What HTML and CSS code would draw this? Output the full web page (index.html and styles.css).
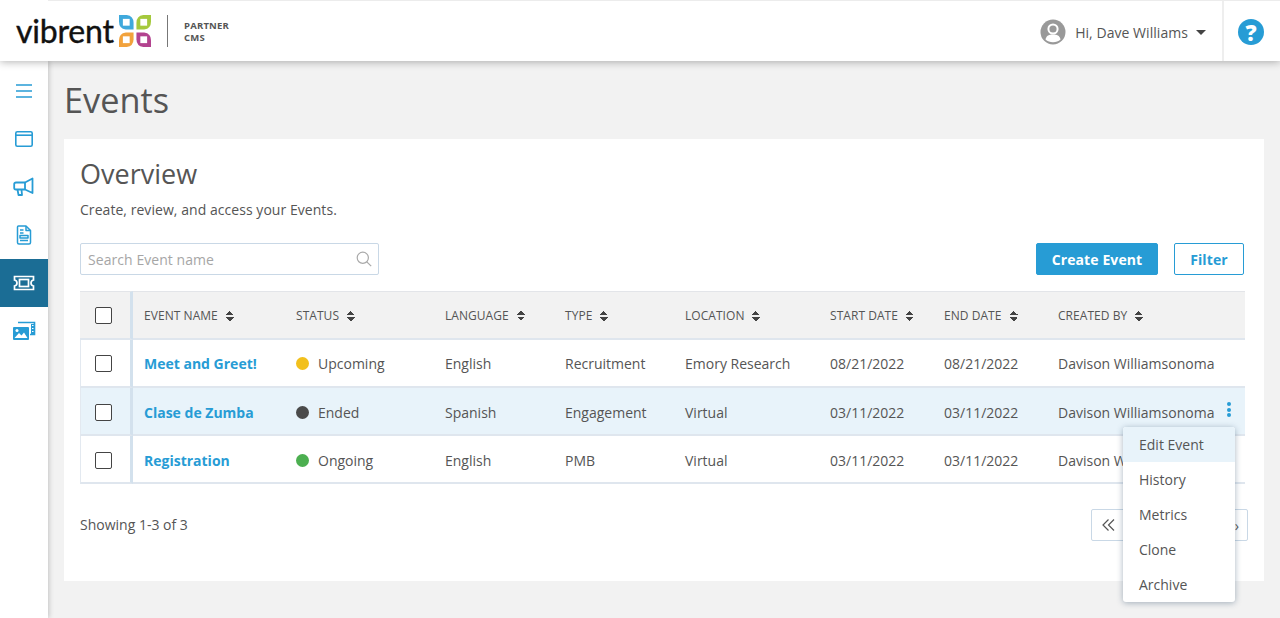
FILE: index.html
```html
<!DOCTYPE html>
<html lang="en">
<head>
<meta charset="utf-8">
<title>Events</title>
<link rel="stylesheet" href="styles.css">
</head>
<body>
<header class="topbar">
  <div class="brand">
    <span class="wordmark">vibrent</span>
    <svg class="brand-mark" width="32" height="32" viewBox="0 0 33 33">
      <path d="M0 0H8Q15 1 15 8V15H7Q0 14 0 7Z" fill="#3fa9dc"/>
      <path d="M33 0H25Q18 1 18 8V15H26Q33 14 33 7Z" fill="#a5c93d"/>
      <path d="M15 18H7Q0 19 0 26V33H8Q15 32 15 25Z" fill="#f2a23c"/>
      <path d="M18 18H26Q33 19 33 26V33H25Q18 32 18 25Z" fill="#b3438f"/>
      <g fill="#fff">
        <rect x="4" y="4" width="7" height="7"/>
        <rect x="22" y="4" width="7" height="7"/>
        <rect x="4" y="22" width="7" height="7"/>
        <rect x="22" y="22" width="7" height="7"/>
      </g>
    </svg>
    <span class="brand-rule"></span>
    <span class="brand-sub">PARTNER<br>CMS</span>
  </div>
  <div class="user">
    <svg width="26" height="26" viewBox="0 0 26 26">
      <circle cx="13" cy="13" r="12.5" fill="#999"/>
      <circle cx="13" cy="10" r="4.6" fill="none" stroke="#fff" stroke-width="2"/>
      <path d="M5.5 20.5C6.5 16.5 9 15.6 13 15.6S19.5 16.5 20.5 20.5C18.5 22.5 16 23.2 13 23.2S7.5 22.5 5.5 20.5Z" fill="#fff"/>
    </svg>
    <span class="user-name">Hi, Dave Williams</span>
    <span class="caret"></span>
  </div>
  <div class="help">
    <span class="help-dot">?</span>
  </div>
</header>

<div class="shell">
  <nav class="sidenav">
    <a class="nav-item">
      <svg width="18" height="16" viewBox="0 0 18 16" fill="none" stroke="#279cd5" stroke-width="1.7"><path d="M1 2H17M1 8H17M1 14H17"/></svg>
    </a>
    <a class="nav-item">
      <svg width="20" height="18" viewBox="0 0 20 18" fill="none" stroke="#279cd5" stroke-width="1.6"><rect x="1.8" y="1.8" width="16.4" height="14.4" rx="1.5"/><path d="M1.8 5.2H18.2"/></svg>
    </a>
    <a class="nav-item">
      <svg width="22" height="20" viewBox="0 0 22 20" fill="none" stroke="#279cd5" stroke-width="1.8" stroke-linejoin="round"><path d="M3 5.5H12L19.5 1.5V16L12 12.5H3Q1.2 12.5 1.2 11V7Q1.2 5.5 3 5.5Z"/><path d="M12 5.5V12.5M4.5 12.5L5.5 18H9L8.500 12.5"/></svg>
    </a>
    <a class="nav-item">
      <svg width="16" height="20" viewBox="0 0 16 20" fill="none" stroke="#279cd5" stroke-width="1.5" stroke-linejoin="round"><path d="M2.5 1H10L14.5 5.5V17.5Q14.5 19 13 19H3Q1.5 19 1.5 17.5V2Q1.5 1 2.5 1Z"/><path d="M10 1V5.5H14.5M4 5H7.5M4 8H7.5M4 15.5H12"/><rect x="4" y="10.5" width="8" height="2.5"/></svg>
    </a>
    <a class="nav-item nav-active">
      <svg width="22" height="16" viewBox="0 0 22 16" fill="none" stroke="#fff" stroke-width="1.7"><path d="M1.5 1.5H20.5V5Q18 5.5 18 8T20.5 11V14.5H1.5V11Q4 10.500 4 8T1.500 5Z"/><rect x="6.500" y="4.500" width="9" height="7"/></svg>
    </a>
    <a class="nav-item">
      <svg width="24" height="20" viewBox="0 0 24 20"><path d="M6 1.500H22.500V13.500H18" fill="none" stroke="#279cd5" stroke-width="1.600"/><rect x="19" y="3" width="3.500" height="10" fill="#279cd5"/><path d="M20 4.500H21.500M20 7.500H21.500M20 10.500H21.500" stroke="#fff"/><rect x="1" y="6" width="16" height="13" rx="1" fill="#279cd5"/><circle cx="5" cy="9.500" r="1.500" fill="#fff"/><path d="M2.500 17L7 12L9.500 14.500L12 11.500L15.500 17Z" fill="#fff"/></svg>
    </a>
  </nav>

  <main class="content">
    <h1 class="page-title">Events</h1>
    <section class="card">
      <h2 class="card-title">Overview</h2>
      <p class="card-intro">Create, review, and access your Events.</p>
      <div class="toolbar">
        <label class="search">
          <span class="search-text">Search Event name</span>
          <svg width="16" height="16" viewBox="0 0 16 16" fill="none" stroke="#a9a9a9" stroke-width="1.200"><circle cx="6.800" cy="6.800" r="5.600"/><path d="M10.800 10.800L15.200 15.200"/></svg>
        </label>
        <div class="actions">
          <button class="btn btn-solid">Create Event</button>
          <button class="btn btn-line">Filter</button>
        </div>
      </div>

      <div class="table-wrap">
        <table class="events">
          <colgroup>
            <col class="c-check"><col class="c-name"><col class="c-status"><col class="c-lang"><col class="c-type"><col class="c-loc"><col class="c-date"><col class="c-date"><col class="c-by">
          </colgroup>
          <thead>
            <tr>
              <th class="check"><span class="box"></span></th>
              <th>EVENT NAME<span class="sort"></span></th>
              <th>STATUS<span class="sort"></span></th>
              <th>LANGUAGE<span class="sort"></span></th>
              <th>TYPE<span class="sort"></span></th>
              <th>LOCATION<span class="sort"></span></th>
              <th>START DATE<span class="sort"></span></th>
              <th>END DATE<span class="sort"></span></th>
              <th>CREATED BY<span class="sort"></span></th>
            </tr>
          </thead>
          <tbody>
            <tr>
              <td class="check"><span class="box"></span></td>
              <td><a class="event-link">Meet and Greet!</a></td>
              <td><span class="dot dot-yellow"></span>Upcoming</td>
              <td>English</td><td>Recruitment</td><td>Emory Research</td><td>08/21/2022</td><td>08/21/2022</td><td>Davison Williamsonoma</td>
            </tr>
            <tr class="row-low row-hover">
              <td class="check"><span class="box"></span></td>
              <td><a class="event-link">Clase de Zumba</a></td>
              <td><span class="dot dot-dark"></span>Ended</td>
              <td>Spanish</td><td>Engagement</td><td>Virtual</td><td>03/11/2022</td><td>03/11/2022</td>
              <td class="by-cell">Davison Williamsonoma<span class="kebab"><i></i><i></i><i></i></span></td>
            </tr>
            <tr class="row-low">
              <td class="check"><span class="box"></span></td>
              <td><a class="event-link">Registration</a></td>
              <td><span class="dot dot-green"></span>Ongoing</td>
              <td>English</td><td>PMB</td><td>Virtual</td><td>03/11/2022</td><td>03/11/2022</td><td>Davison Williamsonoma</td>
            </tr>
          </tbody>
        </table>
        <ul class="menu">
          <li class="menu-on">Edit Event</li>
          <li>History</li>
          <li>Metrics</li>
          <li>Clone</li>
          <li>Archive</li>
        </ul>
      </div>

      <div class="table-foot">
        <span class="count">Showing 1-3 of 3</span>
        <div class="pager">
          <svg width="13" height="12" viewBox="0 0 13 12" fill="none" stroke="#555" stroke-width="1.200"><path d="M6.500 .5L1 6L6.500 11.500M12 .5L6.500 6L12 11.500"/></svg>
          <span class="pager-end">›</span>
        </div>
      </div>
    </section>
  </main>
</div>
</body>
</html>
```
FILE: styles.css
```css
* { box-sizing: border-box; }
html, body { margin: 0; height: 100%; }
body {
  width: 1280px;
  height: 618px;
  overflow: hidden;
  background: #f2f2f2;
  color: #555;
  font-family: "Open Sans", sans-serif;
  font-size: 14px;
}

.topbar {
  position: relative;
  z-index: 3;
  display: flex;
  align-items: center;
  height: 61px;
  background: #fff;
  box-shadow: 0 1px 8px rgba(0, 0, 0, .3);
}
.topbar::before {
  content: "";
  position: absolute;
  top: 0;
  left: 48px;
  right: 0;
  height: 1px;
  background: #ececec;
}
.brand { display: flex; align-items: center; padding-left: 16px; flex: 1; }
.wordmark {
  font-family: Lato, sans-serif;
  font-size: 32px;
  line-height: 34px;
  color: #111;
  width: 103px;
  letter-spacing: -.2px;
  -webkit-text-stroke: .4px #111;
}
.brand-mark { margin-top: 1px; }
.brand-rule { width: 1px; height: 32px; background: #777; margin: 1px 16px 0 16px; }
.brand-sub {
  font-size: 9.500px;
  line-height: 12px;
  font-weight: 700;
  color: #555;
  margin-top: 3px;
  letter-spacing: .2px;
}
.user { display: flex; align-items: center; height: 100%; padding-top: 3px; }
.user-name { margin-left: 9px; color: #555; font-size: 14px; letter-spacing: .05px; }
.caret {
  width: 0;
  height: 0;
  margin: 0 16px 0 8px;
  border-left: 5px solid transparent;
  border-right: 5px solid transparent;
  border-top: 5px solid #444;
}
.help {
  display: flex;
  align-items: center;
  justify-content: center;
  width: 58px;
  height: 100%;
  padding: 3px 2px 0 0;
  border-left: 2px solid #eee;
}
.help-dot {
  width: 26px;
  height: 26px;
  border-radius: 50%;
  background: #279cd5;
  color: #fff;
  font-weight: 800;
  font-size: 22px;
  line-height: 26px;
  text-align: center;
}

.shell { display: flex; height: 557px; }
.sidenav {
  position: relative;
  z-index: 2;
  width: 48px;
  flex: none;
  padding-top: 6px;
  background: #fff;
  box-shadow: 1px 0 5px rgba(0, 0, 0, .2);
}
.nav-item { display: flex; align-items: center; justify-content: center; height: 48px; }
.nav-active { background: #1b6d95; }

.content { flex: 1; padding: 0 16px; }
.page-title {
  margin: 17px 0 18px;
  font-size: 34.300px;
  line-height: 43px;
  font-weight: 400;
  color: #555;
}
.card { height: 442px; padding: 16px; background: #fff; }
.card-title { margin: 0; font-size: 27px; line-height: 38px; font-weight: 400; color: #555; }
.card-intro { margin: 7px 0 0; font-size: 14px; line-height: 20px; color: #555; letter-spacing: .05px; }

.toolbar { display: flex; justify-content: space-between; align-items: center; margin-top: 23px; padding-right: 4px; }
.search {
  display: flex;
  align-items: center;
  justify-content: space-between;
  width: 299px;
  height: 32px;
  padding: 0 6px 0 7px;
  border: 1px solid #c9d8e6;
  border-radius: 2px;
}
.search-text { color: #a6a6a6; font-size: 14px; letter-spacing: .06px; }
.actions { display: flex; gap: 16px; }
.btn {
  height: 32px;
  border-radius: 2px;
  font-family: inherit;
  font-size: 14px;
  font-weight: 700;
  letter-spacing: .1px;
}
.btn-solid { width: 122px; border: 1px solid #279cd5; background: #279cd5; color: #fff; }
.btn-line { width: 70px; border: 1px solid #279cd5; background: #fff; color: #279cd5; }

.table-wrap { position: relative; width: 1165px; margin-top: 16px; }
.events { width: 1165px; table-layout: fixed; border-collapse: separate; border-spacing: 0; }
.c-check { width: 53px; }
.c-name { width: 152px; }
.c-status { width: 149px; }
.c-lang, .c-type { width: 120px; }
.c-loc { width: 145px; }
.c-date { width: 114px; }
.c-by { width: 198px; }
.events th, .events td {
  padding: 0 0 0 11px;
  border-bottom: 2px solid #dfe6ee;
  text-align: left;
  white-space: nowrap;
  overflow: hidden;
}
.events th {
  height: 49px;
  border-top: 1px solid #e3e5e9;
  background: #f2f2f2;
  font-size: 12px;
  font-weight: 400;
  letter-spacing: .05px;
  color: #555;
}
.events td { height: 48px; font-size: 14px; color: #555; }
.events .row-low td { padding-top: 2px; }
.events .check { padding-left: 15px; border-right: 3px solid #d3e1ed; }
.events td.check { padding-left: 14px; border-left: 1px solid #e3e9f0; }
.row-hover td { background: #e8f3fa; }
.by-cell { position: relative; }
.box {
  display: block;
  width: 17px;
  height: 17px;
  border: 1px solid #444;
  border-radius: 2px;
  background: #fff;
}
.sort {
  display: inline-block;
  width: 8px;
  height: 10px;
  margin-left: 8px;
  vertical-align: -1px;
  background:
    linear-gradient(to bottom right, transparent 50%, #444 50%) 0 0 / 4px 4px no-repeat,
    linear-gradient(to bottom left, transparent 50%, #444 50%) 4px 0 / 4px 4px no-repeat,
    linear-gradient(to top right, transparent 50%, #444 50%) 0 6px / 4px 4px no-repeat,
    linear-gradient(to top left, transparent 50%, #444 50%) 4px 6px / 4px 4px no-repeat;
}
.event-link { color: #279cd5; font-weight: 700; }
.dot {
  display: inline-block;
  width: 13px;
  height: 13px;
  margin-right: 9px;
  border-radius: 50%;
  vertical-align: -1px;
}
.dot-yellow { background: #f2c01c; }
.dot-dark { background: #4a4a4a; }
.dot-green { background: #4caf50; }
.kebab {
  position: absolute;
  top: 14px;
  right: 14px;
  display: flex;
  flex-direction: column;
  gap: 1.500px;
}
.kebab i { width: 4px; height: 4px; border-radius: 50%; background: #279cd5; }

.menu {
  position: absolute;
  top: 136px;
  left: 1043px;
  z-index: 2;
  width: 112px;
  margin: 0;
  padding: 0;
  list-style: none;
  background: #fff;
  border-radius: 3px;
  box-shadow: 0 1px 6px rgba(40, 70, 100, .4);
}
.menu li { height: 35px; padding-left: 16px; font-size: 14px; line-height: 35px; color: #555; }
.menu .menu-on { background: #e8f3fa; border-radius: 3px 3px 0 0; }

.table-foot { display: flex; justify-content: space-between; align-items: center; margin-top: 25px; }
.count { margin-bottom: 2px; font-size: 14px; color: #555; }
.pager {
  display: flex;
  align-items: center;
  justify-content: space-between;
  width: 157px;
  height: 32px;
  padding: 0 8px 0 10px;
  border: 1px solid #c9d8e6;
  border-radius: 2px;
}
.pager-end { font-size: 14px; color: #555; }
```
